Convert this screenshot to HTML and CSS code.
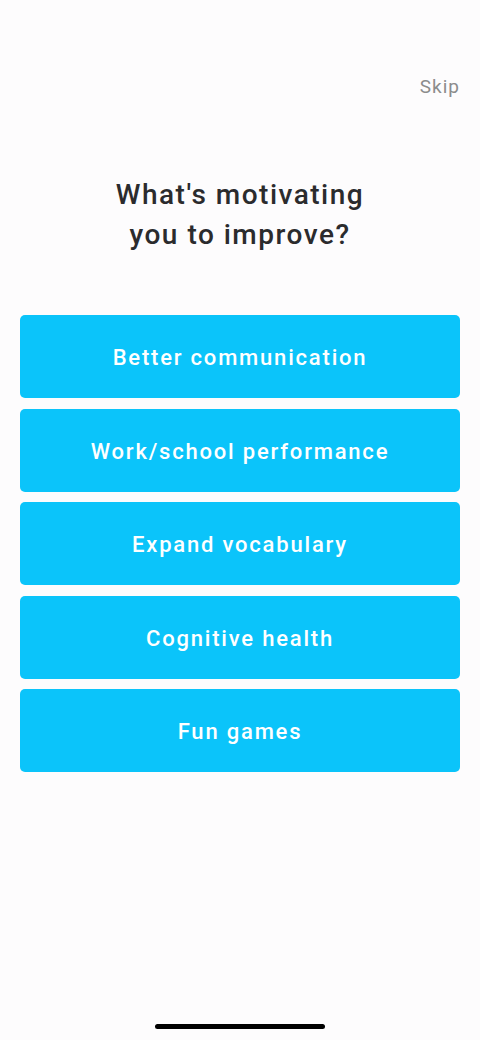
FILE: index.html
```html
<!DOCTYPE html>
<html lang="en">
<head>
    <meta charset="UTF-8">
    <meta name="viewport" content="width=device-width, initial-scale=1.0">
    <title>Motivation</title>
    <link rel="stylesheet" href="styles.css">
</head>
<body>
    <div class="screen">
        <div class="top-bar">
            <a class="skip" href="#">Skip</a>
        </div>

        <h1 class="question">What's motivating<br>you to improve?</h1>

        <div class="options">
            <button class="option">Better communication</button>
            <button class="option">Work/school performance</button>
            <button class="option">Expand vocabulary</button>
            <button class="option">Cognitive health</button>
            <button class="option">Fun games</button>
        </div>

        <div class="home-indicator"></div>
    </div>
</body>
</html>
```

FILE: styles.css
```css
* {
    margin: 0;
    padding: 0;
    box-sizing: border-box;
}

body {
    font-family: Roboto, "Liberation Sans", sans-serif;
    background: #fdfcfd;
    width: 480px;
    height: 1040px;
    overflow: hidden;
}

.screen {
    display: flex;
    flex-direction: column;
    height: 100%;
    padding: 0 20px;
}

.top-bar {
    display: flex;
    justify-content: flex-end;
    padding-top: 75px;
    height: 104px;
}

.skip {
    color: #8c8c8c;
    font-size: 19px;
    text-decoration: none;
    letter-spacing: 1px;
}

.question {
    font-size: 28px;
    font-weight: 500;
    line-height: 40px;
    color: #2b2b2d;
    text-align: center;
    letter-spacing: 1.5px;
    margin-top: 71px;
}

.options {
    display: flex;
    flex-direction: column;
    gap: 10.5px;
    margin-top: 60px;
}

.option {
    height: 83px;
    border: none;
    border-radius: 5px;
    background: #0bc4fa;
    color: #fff;
    font-family: inherit;
    font-size: 22px;
    font-weight: 500;
    letter-spacing: 1.8px;
    padding-top: 2px;
    cursor: pointer;
}

.home-indicator {
    margin: auto auto 11px;
    width: 170px;
    height: 5px;
    border-radius: 3px;
    background: #000;
}
```
